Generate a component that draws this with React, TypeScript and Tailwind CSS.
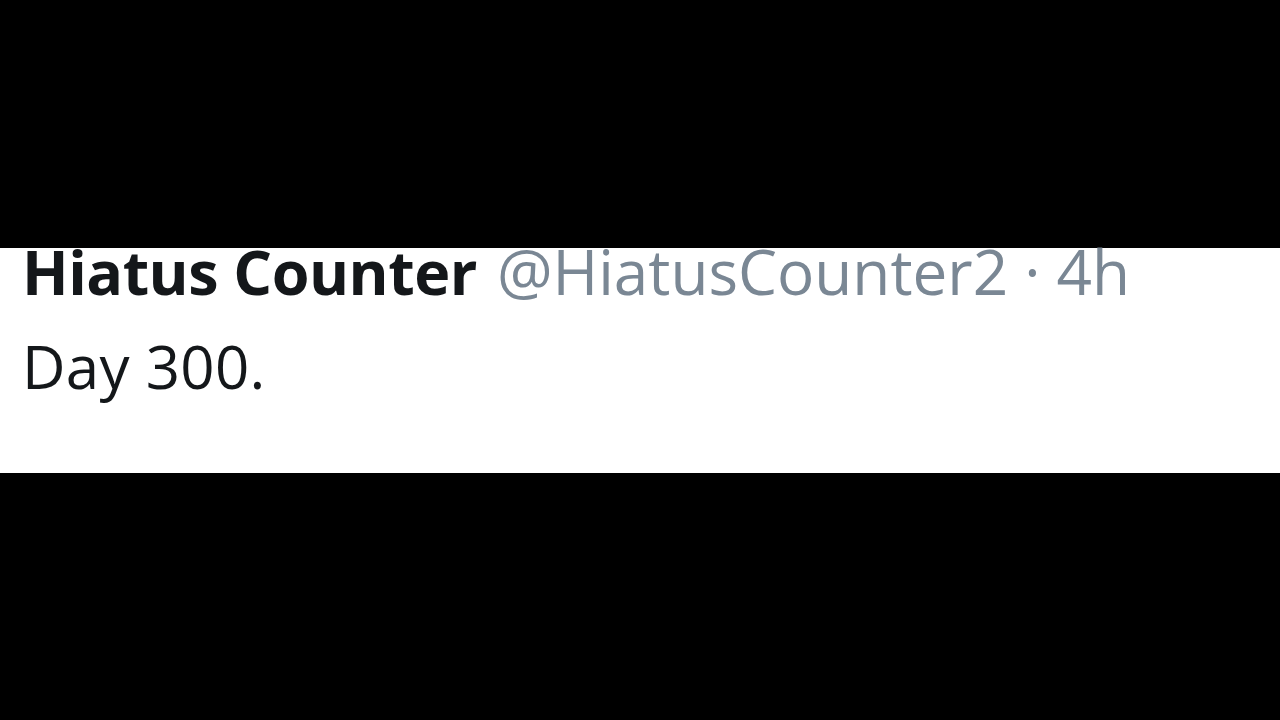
export default function App() {
  return (
    <div className="w-[1280px] h-[720px] bg-black flex flex-col justify-center">
      <div
        className="bg-white h-[225px] px-[22px] text-[#14171a]"
        style={{ fontFamily: '"Open Sans", "Noto Sans", sans-serif' }}
      >
        <div className="flex items-baseline gap-[20px] leading-none whitespace-nowrap -mt-[8px]">
          <span className="text-[61px] font-bold tracking-[-0.5px]">Hiatus Counter</span>
          <span className="text-[62px] text-[#7a8794]">@HiatusCounter2 · 4h</span>
        </div>
        <div className="text-[60px] leading-none mt-[34px] tracking-[0.3px]">Day 300.</div>
      </div>
    </div>
  );
}
